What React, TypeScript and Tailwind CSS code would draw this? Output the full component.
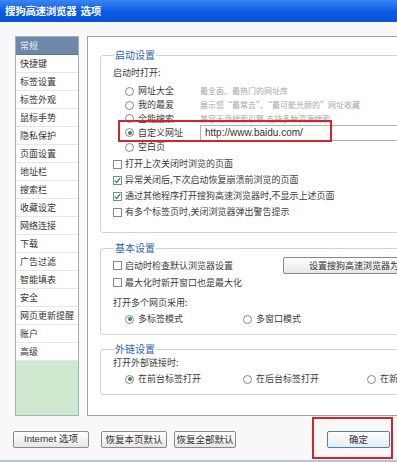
import React from "react";

const navItems = [
  "常规", "快捷键", "标签设置", "标签外观", "鼠标手势", "隐私保护", "页面设置", "地址栏", "搜索栏",
  "收藏设定", "网络连接", "下载", "广告过滤", "智能填表", "安全", "网页更新提醒", "账户", "高级",
];

function Radio({ checked = false }: { checked?: boolean }) {
  return (
    <span className="flex h-[9px] w-[9px] shrink-0 items-center justify-center rounded-full border border-[#7d8a98] bg-white">
      {checked && <span className="h-[4px] w-[4px] rounded-full bg-[#3e8a3e]" />}
    </span>
  );
}

function Check({ checked = false }: { checked?: boolean }) {
  return (
    <span className="flex h-[9px] w-[9px] shrink-0 items-center justify-center border border-[#7d8a98] bg-white">
      {checked && (
        <svg viewBox="0 0 8 8" className="h-[7px] w-[7px]">
          <path d="M1 4.2l2 2L7 1.5" stroke="#2f9a2f" strokeWidth="1.6" fill="none" />
        </svg>
      )}
    </span>
  );
}

function RadioRow({ label, checked, className }: { label: string; checked?: boolean; className: string }) {
  return (
    <div className={"flex items-center " + className}>
      <Radio checked={checked} />
      <span className="ml-[4px] whitespace-nowrap">{label}</span>
    </div>
  );
}

function CheckRow({ label, checked }: { label: string; checked?: boolean }) {
  return (
    <div className="flex h-[16px] items-center">
      <Check checked={checked} />
      <span className="ml-[3px] whitespace-nowrap">{label}</span>
    </div>
  );
}

function Group({ title, children, className }: { title: string; children: React.ReactNode; className: string }) {
  return (
    <fieldset className={"w-[320px] rounded-[3px] border border-[#d2d2d2] pl-[12px] " + className}>
      <legend className="ml-[1px] px-[1px] text-[10px] leading-[12px] text-[#2d62b5]">{title}</legend>
      {children}
    </fieldset>
  );
}

const btn =
  "flex h-[17px] items-center justify-center whitespace-nowrap rounded-[2px] border border-[#8a8a8a] bg-gradient-to-b from-white to-[#e6e6e6] text-[9.5px] text-[#333]";

export default function App() {
  return (
    <div className="relative h-[462px] w-[397px] overflow-hidden bg-[#f8f8f8] font-['Noto_Sans_CJK_SC',sans-serif] text-[9px] text-[#3a3a3a]">
      {/* title bar */}
      <div className="flex h-[22px] items-center bg-gradient-to-b from-[#3a86f2] via-[#0c5be6] to-[#0a52d6] pl-[5px] text-[10.5px] font-bold tracking-[-0.3px] text-white">
        搜狗高速浏览器&nbsp;&nbsp;选项
      </div>

      <div className="flex gap-[8px] pl-[15px] pt-[14px]">
        {/* sidebar */}
        <div className="flex h-[380px] w-[64px] shrink-0 flex-col border border-[#9eb0c2] bg-white">
          {navItems.map((item, i) => (
            <div
              key={item}
              className={
                "h-[18px] shrink-0 border-b pl-[4px] leading-[17px] " +
                (i === 0 ? "border-[#5f7896] bg-[#6d88a8] text-[#e8eef5]" : "border-[#e2e7ec] text-[#333]")
              }
            >
              {item}
            </div>
          ))}
          <div className="flex-1 bg-[#cde8cf]" />
        </div>

        {/* main panel */}
        <div className="h-[380px] w-[330px] shrink-0 border border-[#a2a2a2] bg-white pl-[12px] pt-[12px]">
          <Group title="启动设置" className="h-[184px]">
            <div className="mt-[5px] h-[14px] leading-[14px]">启动时打开:</div>
            <div className="mt-[4px] pl-[12px]">
              <div className="flex h-[14px] items-center">
                <RadioRow label="网址大全" className="w-[75px]" />
                <span className="whitespace-nowrap text-[8px] text-[#a6a6a6]">最全面、最热门的网址库</span>
              </div>
              <div className="flex h-[14px] items-center">
                <RadioRow label="我的最爱" className="w-[75px]" />
                <span className="whitespace-nowrap text-[8px] text-[#a6a6a6]">展示您“最常去”、“最可能光顾的”网址收藏</span>
              </div>
              <div className="flex h-[13px] items-center">
                <RadioRow label="全能搜索" className="w-[75px]" />
                <span className="whitespace-nowrap text-[8px] text-[#a6a6a6]">兼容无须搜索引擎,支持多种资源搜索</span>
              </div>
              <div className="flex h-[15px] items-center">
                <RadioRow label="自定义网址" checked className="w-[75px]" />
                <div className="flex h-[16px] w-[200px] items-center border border-[#a9b2bc] bg-white pl-[4px] font-['Liberation_Sans',sans-serif] text-[10px] text-[#333]">
                  http://www.baidu.com/
                </div>
              </div>
              <div className="flex h-[14px] items-center">
                <RadioRow label="空白页" className="w-[75px]" />
              </div>
            </div>
            <div className="mt-[2px]">
              <CheckRow label="打开上次关闭时浏览的页面" />
              <CheckRow label="异常关闭后,下次启动恢复崩溃前浏览的页面" checked />
              <CheckRow label="通过其他程序打开搜狗高速浏览器时,不显示上述页面" checked />
              <CheckRow label="有多个标签页时,关闭浏览器弹出警告提示" />
            </div>
          </Group>

          <Group title="基本设置" className="mt-[9px] h-[93px]">
            <div className="mt-[3px] flex h-[17px] items-center">
              <div className="w-[170px]">
                <CheckRow label="启动时检查默认浏览器设置" />
              </div>
              <div className={btn + " w-[150px] justify-start pl-[25px] text-[9px]"}>设置搜狗高速浏览器为默认浏览器</div>
            </div>
            <div className="flex h-[17px] items-center">
              <CheckRow label="最大化时新开窗口也是最大化" />
            </div>
            <div className="mt-[5px] h-[14px] leading-[14px]">打开多个网页采用:</div>
            <div className="mt-[2px] flex h-[14px] items-center pl-[12px]">
              <RadioRow label="多标签模式" checked className="w-[118px]" />
              <RadioRow label="多窗口模式" className="w-[120px]" />
            </div>
          </Group>

          <Group title="外链设置" className="mt-[8px] h-[52px]">
            <div className="mt-[1px] h-[14px] leading-[14px]">打开外部链接时:</div>
            <div className="mt-[2px] flex h-[14px] items-center pl-[12px]">
              <RadioRow label="在前台标签打开" checked className="w-[118px]" />
              <RadioRow label="在后台标签打开" className="w-[124px]" />
              <RadioRow label="在新窗口打开" className="w-[80px]" />
            </div>
          </Group>
        </div>
      </div>

      {/* bottom buttons */}
      <div className="mt-[15px] flex pl-[13px] pr-[7px]">
        <div className={btn + " w-[76px] font-['Liberation_Sans','Noto_Sans_CJK_SC',sans-serif]"}>Internet 选项</div>
        <div className={btn + " ml-[12px] w-[66px]"}>恢复本页默认</div>
        <div className={btn + " ml-[7px] w-[62px]"}>恢复全部默认</div>
        <div className="ml-auto flex h-[17px] w-[63px] items-center justify-center rounded-[2px] border border-[#4f7fb0] bg-gradient-to-b from-white to-[#e3ebf3] text-[9.5px] text-[#333]">
          确定
        </div>
      </div>
      <div className="mt-[12px] h-[2px] bg-[#b2c6da]" />

      {/* red highlight annotations */}
      <div className="absolute left-[118px] top-[120px] h-[22px] w-[214px] border-2 border-[#d4232c]" />
      <div className="absolute left-[312px] top-[417px] h-[42px] w-[81px] border-2 border-[#d4232c]" />
    </div>
  );
}
